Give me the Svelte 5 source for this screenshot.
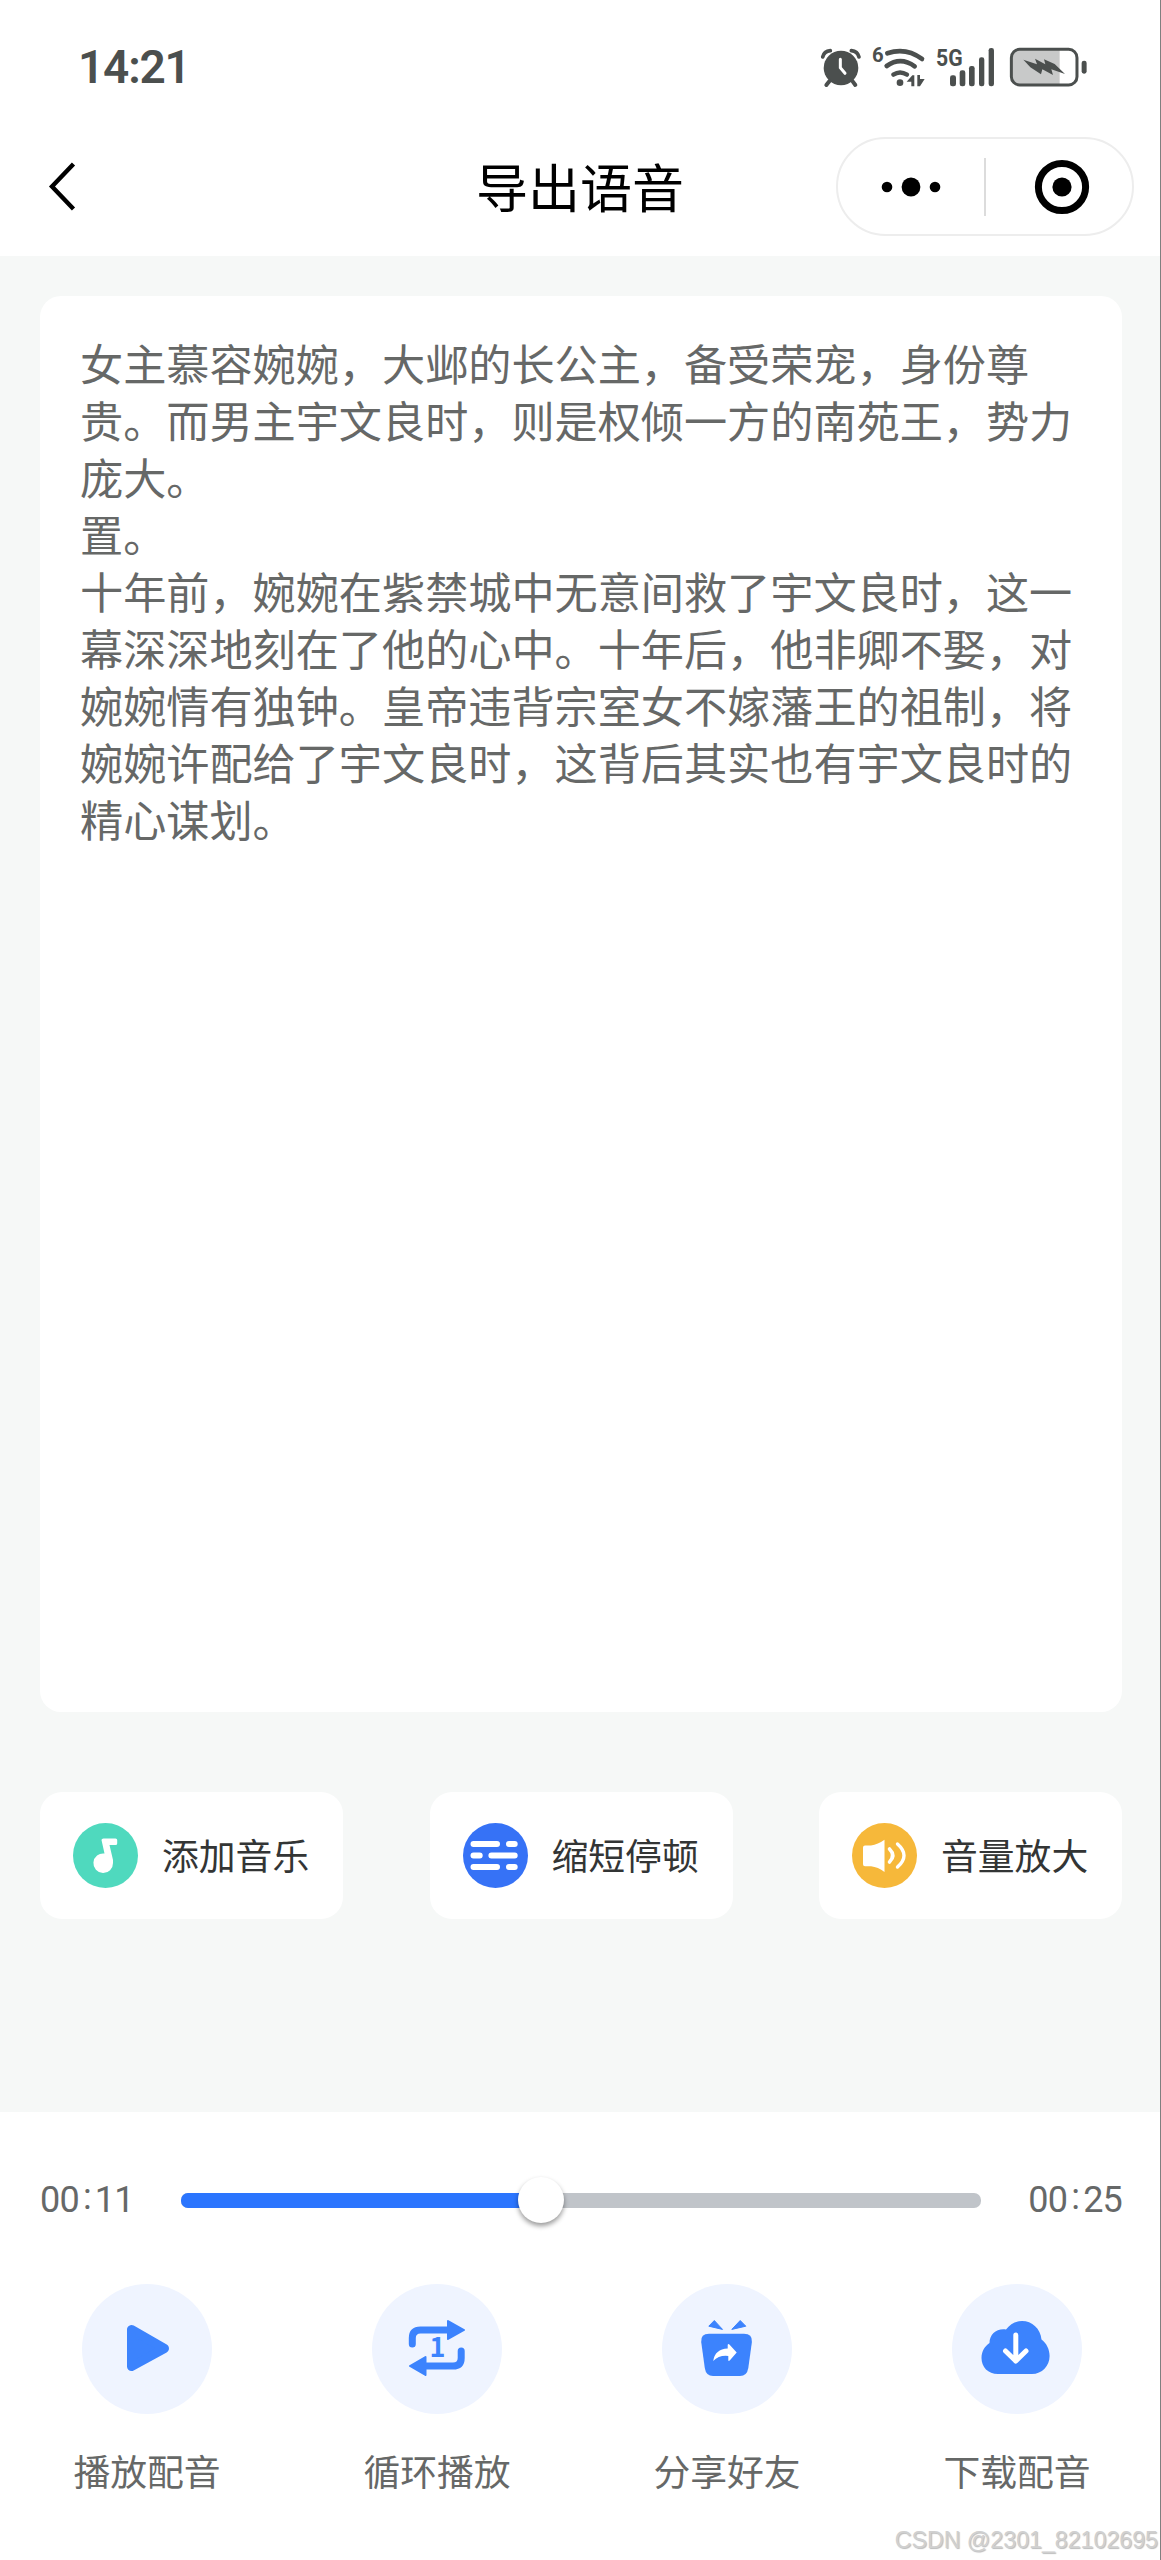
<script>
    let paragraphs = [
        '女主慕容婉婉，大邺的长公主，备受荣宠，身份尊贵。而男主宇文良时，则是权倾一方的南苑王，势力庞大。',
        '置。',
        '十年前，婉婉在紫禁城中无意间救了宇文良时，这一幕深深地刻在了他的心中。十年后，他非卿不娶，对婉婉情有独钟。皇帝违背宗室女不嫁藩王的祖制，将婉婉许配给了宇文良时，这背后其实也有宇文良时的精心谋划。'
    ];

    let tools = [
        { id: 'music', label: '添加音乐' },
        { id: 'pause', label: '缩短停顿' },
        { id: 'volume', label: '音量放大' }
    ];

    let actions = [
        { id: 'play', label: '播放配音' },
        { id: 'loop', label: '循环播放' },
        { id: 'share', label: '分享好友' },
        { id: 'download', label: '下载配音' }
    ];

    let current = ['00', '11'];
    let total = ['00', '25'];

    // Slider position in percent
    let progress = 45;
</script>

<div class="page">
    <div class="status-bar">
        <span class="clock">14:21</span>
        <div class="status-icons">
            <svg class="alarm" viewBox="120 74 126 130">
                <circle cx="183" cy="143" r="52" />
                <path class="line" d="M128 110 Q132 93 151 91 M237 110 Q233 93 214 91" stroke-width="11" />
                <path class="line" d="M148 183 L139 194 M218 183 L226 194" stroke-width="12" />
                <path d="M181 117 V142 L195 159" fill="none" stroke="#fff" stroke-width="9" stroke-linecap="round" />
            </svg>
            <svg class="wifi" viewBox="276 74 162 130">
                <text x="276" y="126" font-size="63" textLength="35" lengthAdjust="spacingAndGlyphs">6</text>
                <path class="line" d="M322 99 Q378 80 426 116" stroke-width="14" />
                <path class="line" d="M320 137 Q362 108 404 138" stroke-width="14" />
                <path class="line" d="M340 163 Q360 150 381 163" stroke-width="13" />
                <circle cx="360" cy="187" r="10" />
                <path d="M380 184 L397 165 H403 V198 H394 V184 Z M412 164 H420 V176 H434 L420 198 H412 Z" />
            </svg>
            <svg class="signal" viewBox="468 74 180 130">
                <text x="468" y="138" font-size="73" textLength="80" lengthAdjust="spacingAndGlyphs">5G</text>
                <rect x="510" y="165" width="18" height="33" rx="7" />
                <rect x="539" y="150" width="17" height="48" rx="7" />
                <rect x="567" y="137" width="17" height="61" rx="7" />
                <rect x="597" y="111" width="16" height="87" rx="7" />
                <rect x="626" y="83" width="16" height="115" rx="7" />
            </svg>
            <svg class="battery" viewBox="688 74 237 130">
                <path d="M840 87 H718 Q695 87 695 110 V171 Q695 194 718 194 H840 Z" fill="#c8c9c9" />
                <rect x="695" y="87" width="197" height="107" rx="25" fill="none" stroke="#4b4f4e" stroke-width="9" />
                <rect x="906" y="121" width="15" height="39" rx="7" />
                <path d="M731 118 L772 132 L766 115 L797 132 L793 117 L825 131 L856 161 L815 147 L820 164 L788 147 L784 162 L752 141 Z" />
            </svg>
        </div>
    </div>

    <div class="nav-bar">
        <svg class="back" viewBox="0 0 30 52">
            <path d="M25.500 3 L4 25.500 L25.500 48" fill="none" stroke="#000" stroke-width="4.400" />
        </svg>
        <h1>导出语音</h1>
        <div class="capsule">
            <svg class="more" viewBox="0 0 60 20">
                <circle cx="6" cy="10" r="5.300" />
                <circle cx="30" cy="10" r="9.400" />
                <circle cx="54" cy="10" r="5.300" />
            </svg>
            <span class="divider"></span>
            <svg class="target" viewBox="0 0 56 56">
                <circle cx="28" cy="28" r="23.600" fill="none" stroke="#000" stroke-width="7" />
                <circle cx="28" cy="28" r="9.600" />
            </svg>
        </div>
    </div>

    <div class="content">
        <div class="text-card">
            {#each paragraphs as paragraph}
                <p>{paragraph}</p>
            {/each}
        </div>

        <div class="tools">
            {#each tools as tool}
                <button class="tool">
                    <svg class="tool-icon" viewBox="0 0 65 65">
                        {#if tool.id === 'music'}
                            <circle cx="32.500" cy="32.500" r="32.500" fill="#4fd9be" />
                            <path d="M28.500 17 Q28.500 15.500 30.500 15.500 H42.500 Q44.200 15.500 44.200 17 V20.500 Q44.200 22 42.500 22 H36.500 L40 37 V40 A9.800 9.800 0 1 1 31.500 30.500 Z" fill="#fff" />
                        {:else if tool.id === 'pause'}
                            <circle cx="32.500" cy="32.500" r="32.500" fill="#3672f6" />
                            <path d="M10.500 21 H34 M46 21 H51.700 M10.500 32.400 H16.700 M28.400 32.400 H51.700 M10.500 44 H34 M46 44 H51.700" stroke="#fff" stroke-width="6" stroke-linecap="round" />
                        {:else}
                            <circle cx="32.500" cy="32.500" r="32.500" fill="#f6b83a" />
                            <path d="M13 22.500 H19 Q26 21.500 32.500 16.800 V49 Q26 44 19 43.200 H13 Q11 43.200 11 41.200 V24.500 Q11 22.500 13 22.500 Z" fill="#fff" />
                            <path d="M37.500 26 Q44 32.500 37.500 39" fill="none" stroke="#fff" stroke-width="3.600" stroke-linecap="round" />
                            <path d="M45.500 21 Q58.500 32.500 45.500 44" fill="none" stroke="#fff" stroke-width="3.400" stroke-linecap="round" />
                        {/if}
                    </svg>
                    <span>{tool.label}</span>
                </button>
            {/each}
        </div>
    </div>

    <div class="player">
        <div class="progress-row">
            <span class="time">{current[0]}<i>:</i>{current[1]}</span>
            <div class="track">
                <div class="track-fill" style="width: {progress}%"></div>
                <div class="thumb" style="left: {progress}%"></div>
            </div>
            <span class="time">{total[0]}<i>:</i>{total[1]}</span>
        </div>

        <div class="actions">
            {#each actions as action}
                <div class="action">
                    <svg class="action-icon" viewBox="0 0 130 130">
                        <circle cx="65" cy="65" r="65" fill="#eff4ff" />
                        {#if action.id === 'play'}
                            <path d="M49.500 45.500 V82.500 L82.500 64.500 Z" fill="#3c83fd" stroke="#3c83fd" stroke-width="9" stroke-linejoin="round" />
                        {:else if action.id === 'loop'}
                            <path d="M40.300 60 V54 Q40.300 45.900 48.500 45.900 H77 M89.200 67 V74 Q89.200 82.100 81 82.100 H53" fill="none" stroke="#3c83fd" stroke-width="7" stroke-linecap="round" />
                            <path d="M76 37 L92 46 L76 55 Z M53.500 73 L38 82 L53.500 91 Z" fill="#3c83fd" stroke="#3c83fd" stroke-width="2" stroke-linejoin="round" />
                            <text class="one" x="65.500" y="72.800" text-anchor="middle">1</text>
                        {:else if action.id === 'share'}
                            <path d="M52.300 36.500 L46.800 42.200 L60.500 45.400 Z M78.200 36.500 L83.800 42.200 L69.800 45.400 Z" fill="#3c83fd" stroke="#3c83fd" stroke-width="1" stroke-linejoin="round" />
                            <path d="M47 49.800 H82 Q90.500 49.800 89.900 58 L86.300 84 Q85 92 78 92 H51 Q44 92 42.800 84 L39.200 58 Q38.500 49.800 47 49.800 Z" fill="#3c83fd" />
                            <path d="M51.200 77 Q53 65 65.700 64.500 V61 Q66 59.300 67.400 60.400 L74.700 68.400 L67.700 76.500 Q66.300 77.500 66.300 76 V72 Q57 71 51.200 77 Z" fill="#fff" />
                        {:else}
                            <path d="M46 90 C36 90 29.500 83 29.500 74 C29.500 67 33 62 37.500 59 C37.500 50 45 44 54 45.500 C58 40 63.500 37 70 37 C80 37 88.500 44.500 89.500 55.500 C94.500 59 97.600 65.500 97.600 72 C97.600 82 90 90 80 90 Z" fill="#3c83fd" />
                            <path d="M63.800 51 V77 M53.500 67 L63.800 77 L74 67" fill="none" stroke="#fff" stroke-width="5" stroke-linecap="round" stroke-linejoin="round" />
                        {/if}
                    </svg>
                    <span>{action.label}</span>
                </div>
            {/each}
        </div>

        <div class="watermark">CSDN @2301_82102695</div>
    </div>
</div>

<style>
    :global(body) {
        margin: 0;
        background: #fff;
    }

    .page {
        box-sizing: border-box;
        display: flex;
        flex-direction: column;
        width: 1161px;
        height: 2560px;
        border-right: 1px solid #7f8080;
        background: #fff;
        font-family: 'Noto Sans CJK SC', sans-serif;
        overflow: hidden;
    }

    .status-bar {
        box-sizing: border-box;
        display: flex;
        justify-content: space-between;
        align-items: center;
        height: 118px;
        padding: 15px 72px 0 78px;
    }

    .clock {
        font-family: Roboto, sans-serif;
        font-size: 46px;
        font-weight: 600;
        line-height: 50px;
        letter-spacing: -1.200px;
        color: #4b4f4e;
    }

    .status-icons {
        display: flex;
        gap: 10px;
    }

    .status-icons svg {
        height: 43.300px;
        overflow: visible;
        fill: #4b4f4e;
    }

    .status-icons .line {
        fill: none;
        stroke: #4b4f4e;
        stroke-linecap: round;
    }

    .status-icons text {
        font-family: Roboto, sans-serif;
        font-weight: 700;
    }

    .alarm {
        width: 42px;
    }

    .wifi {
        width: 54px;
    }

    .signal {
        width: 60px;
    }

    .battery {
        width: 79px;
        margin-left: 3px;
    }

    .nav-bar {
        box-sizing: border-box;
        display: grid;
        grid-template-columns: 1fr auto 1fr;
        align-items: center;
        height: 138px;
        padding: 0 26px 1px 48px;
    }

    .back {
        width: 30px;
        height: 52px;
    }

    h1 {
        margin: 0 0 2px;
        padding-right: 22px;
        font-size: 52px;
        font-weight: 400;
        line-height: 60px;
        color: #000;
    }

    .capsule {
        box-sizing: border-box;
        justify-self: end;
        display: flex;
        align-items: center;
        width: 298px;
        height: 99px;
        padding: 0 42px 0 43px;
        border: 2px solid #ededed;
        border-radius: 50px;
        justify-content: space-between;
    }

    .more {
        width: 60px;
        height: 20px;
    }

    .divider {
        width: 2px;
        height: 58px;
        margin-right: 5px;
        background: #dcdcdc;
    }

    .target {
        width: 56px;
        height: 56px;
    }

    .content {
        box-sizing: border-box;
        height: 1856px;
        padding: 40px 38px 0 40px;
        background: #f6f8f7;
    }

    .text-card {
        box-sizing: border-box;
        height: 1416px;
        padding: 38px 40px;
        border-radius: 21px;
        background: #fff;
    }

    .text-card p {
        margin: 0;
        font-size: 43.150px;
        line-height: 57px;
        color: #666867;
    }

    .tools {
        display: flex;
        justify-content: space-between;
        margin-top: 80px;
    }

    .tool {
        display: flex;
        align-items: center;
        gap: 24px;
        width: 303px;
        height: 127px;
        padding: 0 0 0 33px;
        border: none;
        border-radius: 22px;
        background: #fff;
        font-family: inherit;
        font-size: 36.800px;
        line-height: 50px;
        color: #333535;
        white-space: nowrap;
    }

    .tool span {
        margin-bottom: 4px;
    }

    .tool-icon {
        flex: none;
        width: 65px;
        height: 65px;
    }

    .player {
        display: flex;
        flex-direction: column;
        flex: 1;
        background: #fff;
    }

    .progress-row {
        display: flex;
        align-items: center;
        justify-content: space-between;
        height: 40px;
        margin-top: 68px;
        padding: 0 38px 0 40px;
    }

    .time {
        font-family: Roboto, sans-serif;
        font-size: 36px;
        font-weight: 400;
        line-height: 40px;
        letter-spacing: -0.800px;
        color: #666868;
    }

    .time i {
        position: relative;
        top: -3px;
        padding: 0 4px;
        font-style: normal;
    }

    .track {
        position: relative;
        width: 800px;
        height: 15px;
        border-radius: 7px;
        background: #c0c4c9;
    }

    .track-fill {
        height: 100%;
        border-radius: 7px 0 0 7px;
        background: #2b75fe;
    }

    .thumb {
        position: absolute;
        top: 50%;
        width: 46px;
        height: 46px;
        border-radius: 50%;
        background: #fff;
        box-shadow: 0 3px 5px rgba(0, 0, 0, 0.4);
        transform: translate(-50%, -50%);
    }

    .actions {
        display: grid;
        grid-template-columns: repeat(4, 290px);
        margin: 64px -2px 0 2px;
    }

    .action {
        display: flex;
        flex-direction: column;
        align-items: center;
        gap: 31px;
        font-size: 36.800px;
        line-height: 50px;
        color: #666867;
    }

    .action-icon {
        width: 130px;
        height: 130px;
    }

    .one {
        font-family: 'Noto Sans CJK SC', sans-serif;
        font-size: 27px;
        font-weight: 700;
        fill: #3c83fd;
    }

    .watermark {
        align-self: flex-end;
        margin: 31px 2px 0 0;
        font-family: 'Liberation Sans', sans-serif;
        font-size: 23.200px;
        line-height: 28px;
        color: #d0d0d0;
        text-shadow: 1px 1px 1px #bbb;
    }
</style>
